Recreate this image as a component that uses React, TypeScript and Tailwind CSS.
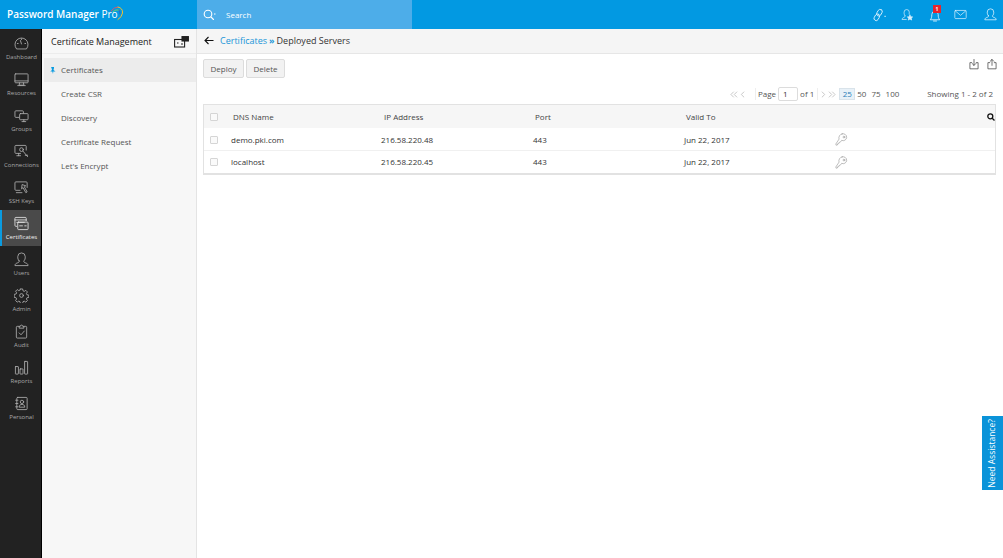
import React from "react";

const font = "font-['Open_Sans','Noto_Sans',sans-serif]";

type IconProps = { d: React.ReactNode; w?: number; h?: number; vb?: string; color?: string; sw?: number };
function Ico({ d, w = 16, h = 16, vb = "0 0 16 16", color = "#b5b5b5", sw = 0.9 }: IconProps) {
  return (
    <svg width={w} height={h} viewBox={vb} fill="none" stroke={color} strokeWidth={sw} strokeLinecap="round" strokeLinejoin="round" className="block shrink-0">
      {d}
    </svg>
  );
}

const navIcons: Record<string, React.ReactNode> = {
  Dashboard: (
    <>
      <path d="M2.500 13.500A7 7 0 1 1 13.500 13.500Z" />
      <path d="M8 8.500 6.800 4.800M8 3v.8M3.600 8h.8M11.600 8h.8" />
    </>
  ),
  Resources: (
    <>
      <rect x="1" y="2" width="14" height="9.500" rx=".8" />
      <path d="M1 9.500h14M6 11.500l-.6 2.500h5.200L10 11.500M4 14.500h8" />
    </>
  ),
  Groups: (
    <>
      <path d="M5 10H2a1 1 0 0 1-1-1V4a1 1 0 0 1 1-1h7a1 1 0 0 1 1 1v1.500" />
      <rect x="6" y="6" width="9" height="6.500" rx=".8" />
      <path d="M8.500 14.500h4M10.500 12.500v2" />
    </>
  ),
  Connections: (
    <>
      <path d="M13 6.500V2.500a1 1 0 0 0-1-1H2a1 1 0 0 0-1 1V9a1 1 0 0 0 1 1h5" />
      <path d="M3 12.500h4M5 10v2.500" />
      <circle cx="8" cy="6" r="2" />
      <path d="M9.500 7.500l5 6M12 12h2.500" />
    </>
  ),
  "SSH Keys": (
    <>
      <path d="M6.500 11H2a1 1 0 0 1-1-1V3a1 1 0 0 1 1-1h11a1 1 0 0 1 1 1v5" />
      <path d="M9 5l3.500 1.200-1.500 1 3 5.500-1.400.8-3-5.500-1.200 1.200Z" />
      <path d="M2.500 13.500h6" />
    </>
  ),
  Certificates: (
    <>
      <path d="M3 11H2a1 1 0 0 1-1-1V2.500a1 1 0 0 1 1-1h10a1 1 0 0 1 1 1V5" />
      <path d="M1 4.200h12M3 6.800h8" />
      <rect x="4" y="6.500" width="11" height="8" rx=".8" />
      <path d="M6 10.500h3M11.500 10.500h1.500" />
    </>
  ),
  Users: (
    <>
      <path d="M5.500 9.500C4.200 8.500 4 6.800 4 5a4 4 0 0 1 8 0c0 1.800-.2 3.500-1.500 4.500-.3 1 .3 1.600 1.500 2 1.600.5 3 1.200 3 3H1c0-1.800 1.400-2.500 3-3 1.200-.4 1.800-1 1.500-2Z" />
    </>
  ),
  Admin: (
    <>
      <circle cx="8" cy="8" r="2" />
      <path d="M6.800 1h2.400l.4 2 1.300.6 1.700-1.100 1.700 1.700-1.100 1.700.6 1.300 2 .4v2.400l-2 .4-.6 1.300 1.100 1.700-1.700 1.700-1.700-1.100-1.300.6-.4 2H6.800l-.4-2-1.300-.6-1.700 1.100-1.700-1.700 1.100-1.700-.6-1.300-2-.4V6.800l2-.4.6-1.300-1.100-1.700 1.700-1.700 1.700 1.100 1.300-.6Z" />
    </>
  ),
  Audit: (
    <>
      <path d="M5.500 2.500H3.500a1 1 0 0 0-1 1V14a1 1 0 0 0 1 1h9a1 1 0 0 0 1-1V3.500a1 1 0 0 0-1-1h-2" />
      <path d="M5.500 4V2.500h1.200a1.300 1.300 0 0 1 2.600 0h1.200V4Z" />
      <path d="M5.500 9.500l2 2 3.500-4" />
    </>
  ),
  Reports: (
    <>
      <rect x="1.500" y="7" width="3.200" height="8" rx=".4" />
      <rect x="6.400" y="9.500" width="3.200" height="5.500" rx=".4" />
      <rect x="11.300" y="1.500" width="3.200" height="13.500" rx=".4" />
    </>
  ),
  Personal: (
    <>
      <rect x="3" y="1.500" width="11" height="13" rx="1" />
      <circle cx="8.500" cy="6.300" r="1.800" />
      <path d="M5.500 11.500c.2-2 1.500-2.500 3-2.500s2.800.5 3 2.500ZM1.800 4.500h2.400M1.800 8h2.400M1.800 11.500h2.400" />
    </>
  ),
};

const navItems = ["Dashboard", "Resources", "Groups", "Connections", "SSH Keys", "Certificates", "Users", "Admin", "Audit", "Reports", "Personal"];
const subItems = ["Certificates", "Create CSR", "Discovery", "Certificate Request", "Let's Encrypt"];

function NavItem({ label }: { label: string }) {
  const active = label === "Certificates";
  return (
    <div className={`h-9 flex flex-col items-center pt-[6px] border-l-2 ${active ? "bg-[#4a4a4a] border-[#0a9be0]" : "border-transparent"}`}>
      <Ico d={navIcons[label]} w={15} h={15} color={active ? "#e4e4e4" : "#b0b0b0"} />
      <span className={`mt-[1px] text-[6px] leading-[10px] whitespace-nowrap ${active ? "text-[#f2f2f2]" : "text-[#a8a8a8]"}`}>{label}</span>
    </div>
  );
}

function Check() {
  return (
    <span className="w-[33px] shrink-0 flex pl-[6px]">
      <span className="w-[8px] h-[8px] border border-[#d5d5d5] rounded-[1px] bg-[#fafafa]" />
    </span>
  );
}

function Row({ name, ip, last }: { name: string; ip: string; last?: boolean }) {
  return (
    <div className={`flex items-center text-[8px] text-[#333] ${last ? "h-[22px]" : "h-[23px] pt-[1px] border-b border-[#f0f0f0]"}`}>
      <Check />
      <span className="w-[144px] -ml-[6px]">{name}</span>
      <span className="w-[152px] ml-[6px]">{ip}</span>
      <span className="w-[151px]">443</span>
      <span className="w-[151px]">Jun 22, 2017</span>
      <Ico
        w={13}
        h={13}
        color="#9a9a9a"
        sw={0.8}
        d={
          <>
            <path d="M8.800 1a5 5 0 0 0-3.800 6.500L1 13.500l.3 1.500 1.700-.3.300-1.500 1.400-.2.300-1.400 1.500-.3 1.700-2.300A4.300 4.300 0 1 0 8.800 1Z" />
            <circle cx="11" cy="5" r="1.100" />
          </>
        }
      />
    </div>
  );
}

export default function App() {
  return (
    <div className={`${font} w-[1003px] h-[558px] overflow-hidden relative flex flex-col bg-white`}>
      <header className="h-[29px] shrink-0 bg-[#0299e2] flex items-stretch text-white">
        <div className="w-[197px] flex items-center pl-[7px] relative">
          <span className="text-[10px] font-semibold whitespace-nowrap">
            Password Manager <span className="font-normal">Pro</span>
          </span>
          <svg width="15" height="16" viewBox="0 0 15 16" fill="none" className="absolute left-[109px] top-[5px]" strokeWidth="1" strokeLinecap="round">
            <path d="M2 6Q5 2 9 2" stroke="#d9556e" />
            <path d="M9 2Q14 3 13.500 8 13 12 9 14.500" stroke="#f2c12e" />
            <path d="M4 6.500Q7 4 10 5" stroke="#6fcf6a" />
            <path d="M10 5Q11.500 7 11 9" stroke="#2f62c9" />
          </svg>
        </div>
        <div className="w-[215px] bg-[#4dade9] flex items-center pl-[6px] gap-[10px]">
          <svg width="13" height="12" viewBox="0 0 13 12" fill="none" stroke="#fff" strokeWidth="1.100" className="shrink-0">
            <circle cx="5" cy="5" r="3.800" />
            <path d="M8 8l2.500 2.500" strokeLinecap="round" />
            <path d="M11 5h1.500" />
          </svg>
          <span className="text-[8px]">Search</span>
        </div>
        <div className="flex-1 flex items-center justify-end pr-[6px]">
          <Ico w={14} h={14} color="#d7effc" sw={1} d={<><g transform="rotate(30 7 8)"><rect x="4.500" y="1" width="5" height="8" rx="2.500" /><rect x="4.500" y="7" width="5" height="8" rx="2.500" /></g><path d="M14.500 9.500h1" /></>} />
          <span className="ml-[15px]"><Ico w={13} h={14} color="#d7effc" sw={0.9} d={<><path d="M5 9C3.800 8 3.800 6 3.800 4.500a3.200 3.200 0 0 1 6.400 0c0 .8 0 1.500-.2 2.200M5 9c.2 1-.5 1.500-1.500 2C2.300 11.500 1.500 12 1.300 13.500H6.500" /><path d="M11 8l1 2.200 2.300.2-1.700 1.500.5 2.300-2.100-1.200-2 1.200.5-2.300-1.700-1.500 2.300-.2Z" fill="#d7effc" /></>} /></span>
          <span className="ml-[15px] relative">
            <Ico w={12} h={14} color="#d7effc" sw={0.9} d={<><path d="M2.500 11.500c1-1 1.300-2.500 1.300-5a3.200 3.200 0 0 1 6.400 0c0 2.500.3 4 1.300 5Z" /><path d="M5.500 13h3" /></>} vb="1 0 12 14" />
            <span className="absolute left-[4px] top-[-3px] w-[8px] h-[8px] bg-[#e8242c] text-white text-[5px] leading-[8px] text-center font-bold">1</span>
          </span>
          <span className="ml-[13px]"><Ico w={13} h={13} color="#d7effc" sw={0.9} d={<><rect x="1" y="3" width="14" height="10" rx="1" /><path d="M1.500 3.500 8 9l6.500-5.500" /></>} /></span>
          <span className="ml-[17px]"><Ico w={13} h={13} color="#d7effc" sw={1} d={navIcons.Users} /></span>
        </div>
      </header>

      <div className="flex-1 flex min-h-0">
        <nav className="w-[42px] shrink-0 bg-[#222222] border-r border-black pt-[1px]">
          {navItems.map((n) => (
            <NavItem key={n} label={n} />
          ))}
        </nav>

        <aside className="w-[155px] shrink-0 bg-[#f7f7f7] border-r border-[#e4e4e4]">
          <div className="h-[25px] flex items-center justify-between pt-[2px] pl-[9px] pr-[7px] border-b border-[#ececec] text-[9px] text-[#222]">
            <span>Certificate Management</span>
            <svg width="15" height="12" viewBox="0 0 15 12" fill="none" stroke="#222" strokeWidth="1.100" className="shrink-0">
              <rect x=".6" y="3.500" width="10" height="7.500" />
              <rect x="8" y=".6" width="6.400" height="4.400" fill="#222" />
              <path d="M3 7h1.500M7 8h2" />
            </svg>
          </div>
          <div className="mt-[4px] pl-[2px]">
            {subItems.map((s, i) => (
              <div key={s} className={`h-6 flex items-center pl-[17px] text-[8px] text-[#555] relative ${i === 0 ? "bg-[#ececec]" : ""}`}>
                {i === 0 && (
                  <svg width="6" height="7" viewBox="0 0 6 7" className="absolute left-[6px] top-[9px]" fill="#0a9be0">
                    <path d="M1 0h3v1L3.500 3 5.500 4.500H3.300L3 7 2.300 4.500H.3L2 3 1.500 1Z" />
                  </svg>
                )}
                {s}
              </div>
            ))}
          </div>
        </aside>

        <main className="flex-1 min-w-0 flex flex-col">
          <div className="h-[25px] bg-[#f5f5f5] border-b border-[#e6e6e6] flex items-center pl-[7px] pb-[1px] text-[9px]">
            <svg width="10" height="9" viewBox="0 0 10 9" fill="none" stroke="#111" strokeWidth="1.100" className="mr-[6px]">
              <path d="M9.500 4.500H1M4.500 1 1 4.500 4.500 8" />
            </svg>
            <span className="text-[#1a96d8]">Certificates</span>
            <span className="text-[#1a96d8] mx-[2px] font-bold">»</span>
            <span className="text-[#333]">Deployed Servers</span>
          </div>

          <div className="flex items-start justify-between pl-[6px] pr-[6px] pt-[5px] h-[27px]">
            <div className="flex gap-[2px] text-[8px] text-[#555]">
              <button className="w-[41px] h-[19px] bg-[#f2f2f2] border border-[#dcdcdc] rounded-[2px]">Deploy</button>
              <button className="w-[39px] h-[19px] bg-[#f2f2f2] border border-[#dcdcdc] rounded-[2px]">Delete</button>
            </div>
            <div className="flex gap-[8px] -mt-[1px]">
              <Ico w={10} h={12} vb="0 0 11 12" color="#555" sw={0.9} d={<><path d="M3 4.500H1v6.800h9V4.500H8" /><path d="M5.500 1v6.500M3.500 5.500l2 2 2-2" /></>} />
              <Ico w={10} h={12} vb="0 0 11 12" color="#555" sw={0.9} d={<><path d="M3 4.500H1v6.800h9V4.500H8" /><path d="M5.500 7.500V1M3.500 3l2-2 2 2" /></>} />
            </div>
          </div>

          <div className="h-[23px] flex items-center text-[8px] text-[#555] pl-[533px] pr-[10px] pt-[3px]">
            <svg width="16" height="7" viewBox="0 0 17 7" fill="none" stroke="#c4c4c4" strokeWidth="1" className="shrink-0">
              <path d="M4 .5 1 3.500 4 6.500M7.500.5l-3 3 3 3M15 .5l-3 3 3 3" />
            </svg>
            <span className="ml-[9px] w-[1px] h-[12px] bg-[#eeeeee]" />
            <span className="ml-[2px]">Page</span>
            <span className="ml-[2px] w-[20px] h-[14px] border border-[#dcdcdc] rounded-[2px] pl-[4px] leading-[12px] text-[#333]">1</span>
            <span className="ml-[2px]">of 1</span>
            <span className="ml-[3px] w-[1px] h-[12px] bg-[#eeeeee]" />
            <svg width="16" height="7" viewBox="0 0 17 7" fill="none" stroke="#c4c4c4" strokeWidth="1" className="shrink-0 ml-[2px]">
              <path d="M2 .5l3 3-3 3M9.500.5l3 3-3 3M13 .5l3 3-3 3" />
            </svg>
            <span className="ml-[3px] w-[16px] h-[12px] bg-[#e8f1f8] border border-[#d9e3ea] text-[#2d7fb8] text-center leading-[10px]">25</span>
            <span className="ml-[2px]">50</span>
            <span className="ml-[5px]">75</span>
            <span className="ml-[5px]">100</span>
            <span className="ml-auto">Showing 1 - 2 of 2</span>
          </div>

          <div className="ml-[6px] mr-[7px] border border-[#e2e2e2] border-b-2">
            <div className="h-[23px] pt-[1px] bg-[#f6f6f6] flex items-center text-[8px] text-[#444] relative">
              <Check />
              <span className="w-[151px] -ml-[4px]">DNS Name</span>
              <span className="w-[151px]">IP Address</span>
              <span className="w-[151px]">Port</span>
              <span className="w-[151px]">Valid To</span>
              <svg width="8" height="8" viewBox="0 0 8 8" fill="none" stroke="#111" strokeWidth="1.300" className="absolute right-0 top-[8px]">
                <circle cx="3.300" cy="3.300" r="2.500" />
                <path d="M5.200 5.200 7.500 7.500" />
              </svg>
            </div>
            <Row name="demo.pki.com" ip="216.58.220.48" />
            <Row name="localhost" ip="216.58.220.45" last />
          </div>
        </main>
      </div>

      <div className="absolute left-[982px] top-[416px] w-[21px] h-[74px] bg-[#0a93d9] flex items-center justify-center">
        <span className="text-white text-[8.500px] font-medium whitespace-nowrap -rotate-90">Need Assistance?</span>
      </div>
    </div>
  );
}
